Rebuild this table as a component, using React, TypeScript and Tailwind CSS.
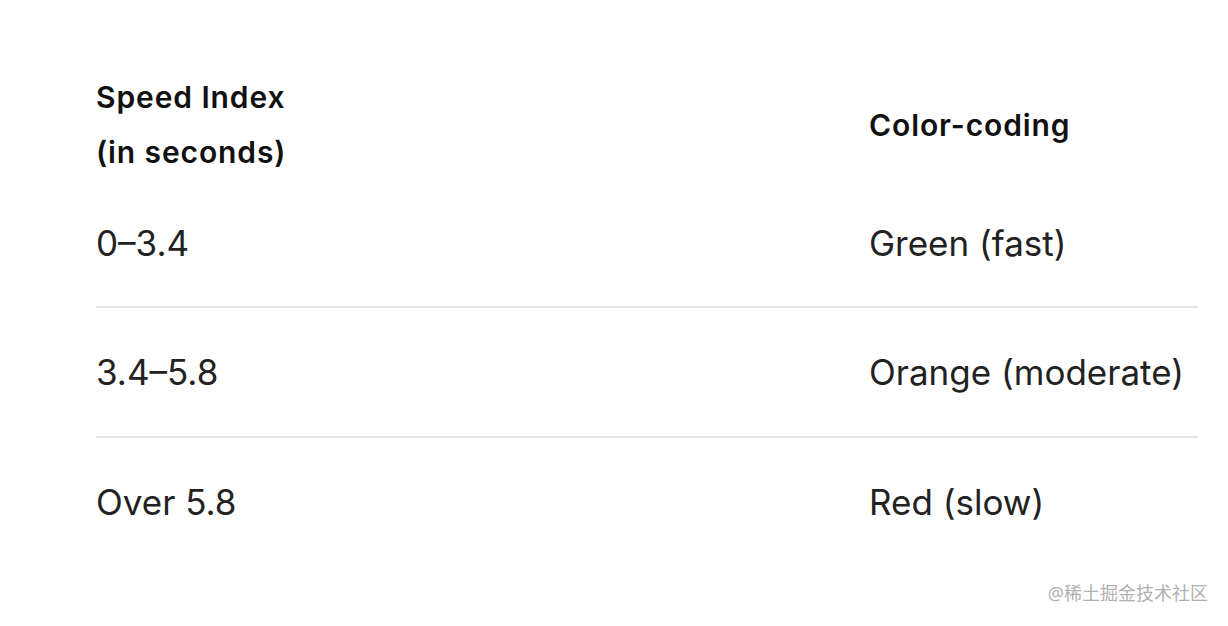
import React from "react";

const rows = [
    { range: "0–3.4", color: "Green (fast)" },
    { range: "3.4–5.8", color: "Orange (moderate)" },
    { range: "Over 5.8", color: "Red (slow)" },
];

export default function App() {
    return (
        <div className="relative w-[1228px] h-[626px] bg-white overflow-hidden font-['Inter',sans-serif]">
            <div className="pt-[70px] pl-[96px] w-[1198px]">
                {/* Header */}
                <div className="grid grid-cols-[773px_1fr] h-[110px] items-center text-[30px] tracking-[0.9px] font-semibold text-[#111] leading-[55px]">
                    <div>
                        Speed Index
                        <br />
                        (in seconds)
                    </div>
                    <div>Color-coding</div>
                </div>

                {/* Rows */}
                {rows.map((r, i) => (
                    <div
                        key={r.range}
                        className={`grid grid-cols-[773px_1fr] items-center text-[35px] text-[#222] ${i === 0 ? "h-[126px]" : "h-[130px] border-t-2 border-[#e3e3e3]"}`}
                    >
                        <div>{r.range}</div>
                        <div>{r.color}</div>
                    </div>
                ))}
            </div>

            <div className="absolute right-[20px] bottom-[19px] text-[18px] text-[#b0b0b0] font-['Noto_Sans','Noto_Sans_CJK_SC',sans-serif]">
                @稀土掘金技术社区
            </div>
        </div>
    );
}
